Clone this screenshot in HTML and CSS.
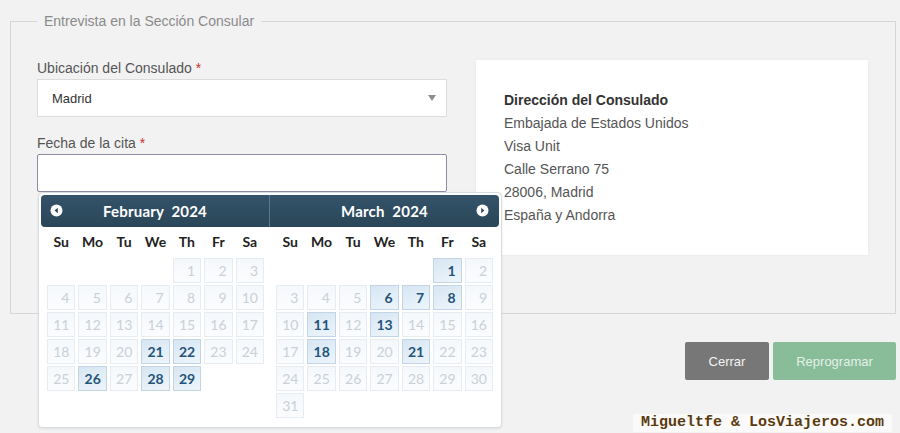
FILE: index.html
```html
<!DOCTYPE html>
<html lang="es">
<head>
<meta charset="utf-8">
<title>Entrevista</title>
<link rel="stylesheet" href="styles.css">
</head>
<body>
<fieldset class="box">
  <legend class="box-legend">Entrevista en la Sección Consular</legend>
  <div class="cols">
    <div class="form-col">
      <label class="lbl">Ubicación del Consulado <span class="req">*</span></label>
      <div class="select">
        <span>Madrid</span>
        <span class="caret"></span>
      </div>
      <label class="lbl lbl-2">Fecha de la cita <span class="req">*</span></label>
      <div class="date-field">
        <div class="input"></div>
        <div class="dp">
          <div class="dp-month">
            <div class="dp-head dp-head-first">
              <span class="dp-nav dp-prev"><svg width="13" height="13" viewBox="0 0 13 13"><circle cx="6.5" cy="6.5" r="6" fill="#fff"/><path d="M7.8 3.8 L4.6 6.5 L7.8 9.2 Z" fill="#2c4a5c"/></svg></span>
              <span class="dp-title">February&nbsp; 2024</span>
            </div>
            <div class="dp-days"><span>Su</span><span>Mo</span><span>Tu</span><span>We</span><span>Th</span><span>Fr</span><span>Sa</span></div>
            <div class="dp-grid">
              <span class="e"></span><span class="e"></span><span class="e"></span><span class="e"></span><span class="d">1</span><span class="d">2</span><span class="d">3</span>
              <span class="d">4</span><span class="d">5</span><span class="d">6</span><span class="d">7</span><span class="d">8</span><span class="d">9</span><span class="d">10</span>
              <span class="d">11</span><span class="d">12</span><span class="d">13</span><span class="d">14</span><span class="d">15</span><span class="d">16</span><span class="d">17</span>
              <span class="d">18</span><span class="d">19</span><span class="d">20</span><span class="a">21</span><span class="a">22</span><span class="d">23</span><span class="d">24</span>
              <span class="d">25</span><span class="a">26</span><span class="d">27</span><span class="a">28</span><span class="a">29</span>
            </div>
          </div>
          <div class="dp-month">
            <div class="dp-head dp-head-last">
              <span class="dp-title">March&nbsp; 2024</span>
              <span class="dp-nav dp-next"><svg width="13" height="13" viewBox="0 0 13 13"><circle cx="6.5" cy="6.5" r="6" fill="#fff"/><path d="M5.2 3.8 L8.4 6.5 L5.2 9.2 Z" fill="#2c4a5c"/></svg></span>
            </div>
            <div class="dp-days"><span>Su</span><span>Mo</span><span>Tu</span><span>We</span><span>Th</span><span>Fr</span><span>Sa</span></div>
            <div class="dp-grid">
              <span class="e"></span><span class="e"></span><span class="e"></span><span class="e"></span><span class="e"></span><span class="a">1</span><span class="d">2</span>
              <span class="d">3</span><span class="d">4</span><span class="d">5</span><span class="a">6</span><span class="a">7</span><span class="a">8</span><span class="d">9</span>
              <span class="d">10</span><span class="a">11</span><span class="d">12</span><span class="a">13</span><span class="d">14</span><span class="d">15</span><span class="d">16</span>
              <span class="d">17</span><span class="a">18</span><span class="d">19</span><span class="d">20</span><span class="a">21</span><span class="d">22</span><span class="d">23</span>
              <span class="d">24</span><span class="d">25</span><span class="d">26</span><span class="d">27</span><span class="d">28</span><span class="d">29</span><span class="d">30</span>
              <span class="d">31</span>
            </div>
          </div>
        </div>
      </div>
    </div>
    <div class="card">
      <div class="card-title">Dirección del Consulado</div>
      <div>Embajada de Estados Unidos</div>
      <div>Visa Unit</div>
      <div>Calle Serrano 75</div>
      <div>28006, Madrid</div>
      <div>España y Andorra</div>
    </div>
  </div>
</fieldset>
<div class="actions">
  <button class="btn btn-close">Cerrar</button>
  <button class="btn btn-go">Reprogramar</button>
</div>
<div class="watermark">Migueltfe &amp; LosViajeros.com</div>
</body>
</html>
```
FILE: styles.css
```css
* { box-sizing: border-box; }
html, body { height: 100%; }
body {
  margin: 0;
  padding: 0 4px 0 10px;
  background: #f2f2f2;
  font-family: "Liberation Sans", Arial, sans-serif;
  font-size: 14px;
  color: #555;
  overflow: hidden;
  position: relative;
}
.box {
  margin: 13px 0 0 0;
  border: 1px solid #d6d6d6;
  padding: 31px 27px 58px 26px;
  min-width: 0;
}
.box-legend {
  padding: 0 7px;
  color: #8a8a8a;
  font-size: 14px;
  line-height: 16px;
}
.cols {
  display: grid;
  grid-template-columns: 410px 1fr;
  column-gap: 29px;
}
.lbl {
  display: block;
  line-height: 17px;
  margin-bottom: 2px;
  color: #555;
}
.lbl-2 { margin-top: 18px; }
.req { color: #c9302c; }
.select {
  height: 38px;
  background: #fff;
  border: 1px solid #dcdcdc;
  display: flex;
  align-items: center;
  justify-content: space-between;
  padding: 0 10px 0 14px;
  font-size: 13px;
  color: #333;
}
.caret {
  width: 0; height: 0;
  border-left: 4px solid transparent;
  border-right: 4px solid transparent;
  border-top: 6px solid #8c8c8c;
}
.date-field { position: relative; }
.input {
  height: 38px;
  background: #fff;
  border: 1px solid #8f8ca6;
  border-radius: 2px;
}
.dp {
  position: absolute;
  top: 100%;
  left: 1px;
  width: 464px;
  display: flex;
  background: #fff;
  border: 1px solid #d6dde3;
  border-radius: 4px;
  padding: 2px 2px 9px 2px;
  box-shadow: 0 1px 3px rgba(0,0,0,0.08);
  z-index: 2;
  font-family: "Lato", "DejaVu Sans", sans-serif;
}
.dp-month { flex: 1; }
.dp-head {
  height: 32px;
  background: linear-gradient(#34536a, #2a4658);
  display: flex;
  align-items: center;
  position: relative;
  justify-content: center;
}
.dp-head-first { border-radius: 4px 0 0 4px; border-right: 1px solid #5a7790; }
.dp-head-last { border-radius: 0 4px 4px 0; }
.dp-title {
  color: #fff;
  font-weight: 700;
  font-size: 15px;
  letter-spacing: 0.2px;
}
.dp-nav { position: absolute; top: 9px; display: flex; }
.dp-prev { left: 9px; }
.dp-next { right: 10px; }
.dp-days, .dp-grid {
  display: grid;
  grid-template-columns: repeat(7, 1fr);
  column-gap: 3px;
  margin: 0 6px;
}
.dp-days {
  height: 28px;
  align-items: center;
  text-align: center;
  font-weight: 700;
  font-size: 14px;
  color: #222;
  margin-bottom: 3px;
}
.dp-grid {
  grid-auto-rows: 25px;
  row-gap: 2px;
}
.dp-grid span {
  text-align: right;
  padding-right: 5px;
  line-height: 23px;
  font-size: 14px;
}
.dp-grid .d {
  border: 1px solid #e6ecf1;
  background: linear-gradient(#f5f8fb, #fbfcfe);
  color: #c8d1d8;
}
.dp-grid .a {
  border: 1px solid #c3d5e5;
  background: linear-gradient(160deg, #d6e6f3, #eef5fb);
  color: #245479;
  font-weight: 700;
}
.card {
  background: #fff;
  padding: 29px 28px 28px;
  line-height: 23px;
  font-size: 14px;
  color: #555;
  box-shadow: 0 0 2px rgba(0,0,0,0.06);
}
.card-title { font-weight: 700; color: #333; }
.actions {
  margin-top: 28px;
  display: flex;
  justify-content: flex-end;
  gap: 4px;
}
.btn {
  height: 38px;
  border: none;
  border-radius: 2px;
  font-family: "Liberation Sans", Arial, sans-serif;
  font-size: 13px;
  padding: 0;
}
.btn-close { width: 84px; background: #777; color: #f4f4f4; }
.btn-go { width: 123px; background: #89bd9a; color: #e3f1e7; }
.watermark {
  position: absolute;
  right: 8px;
  bottom: 1px;
  padding: 0 8px;
  background: rgba(255,255,255,0.6);
  font-family: "Liberation Mono", "Courier New", monospace;
  font-weight: 700;
  font-size: 15px;
  line-height: 18px;
  color: #5a3a0c;
}
```
